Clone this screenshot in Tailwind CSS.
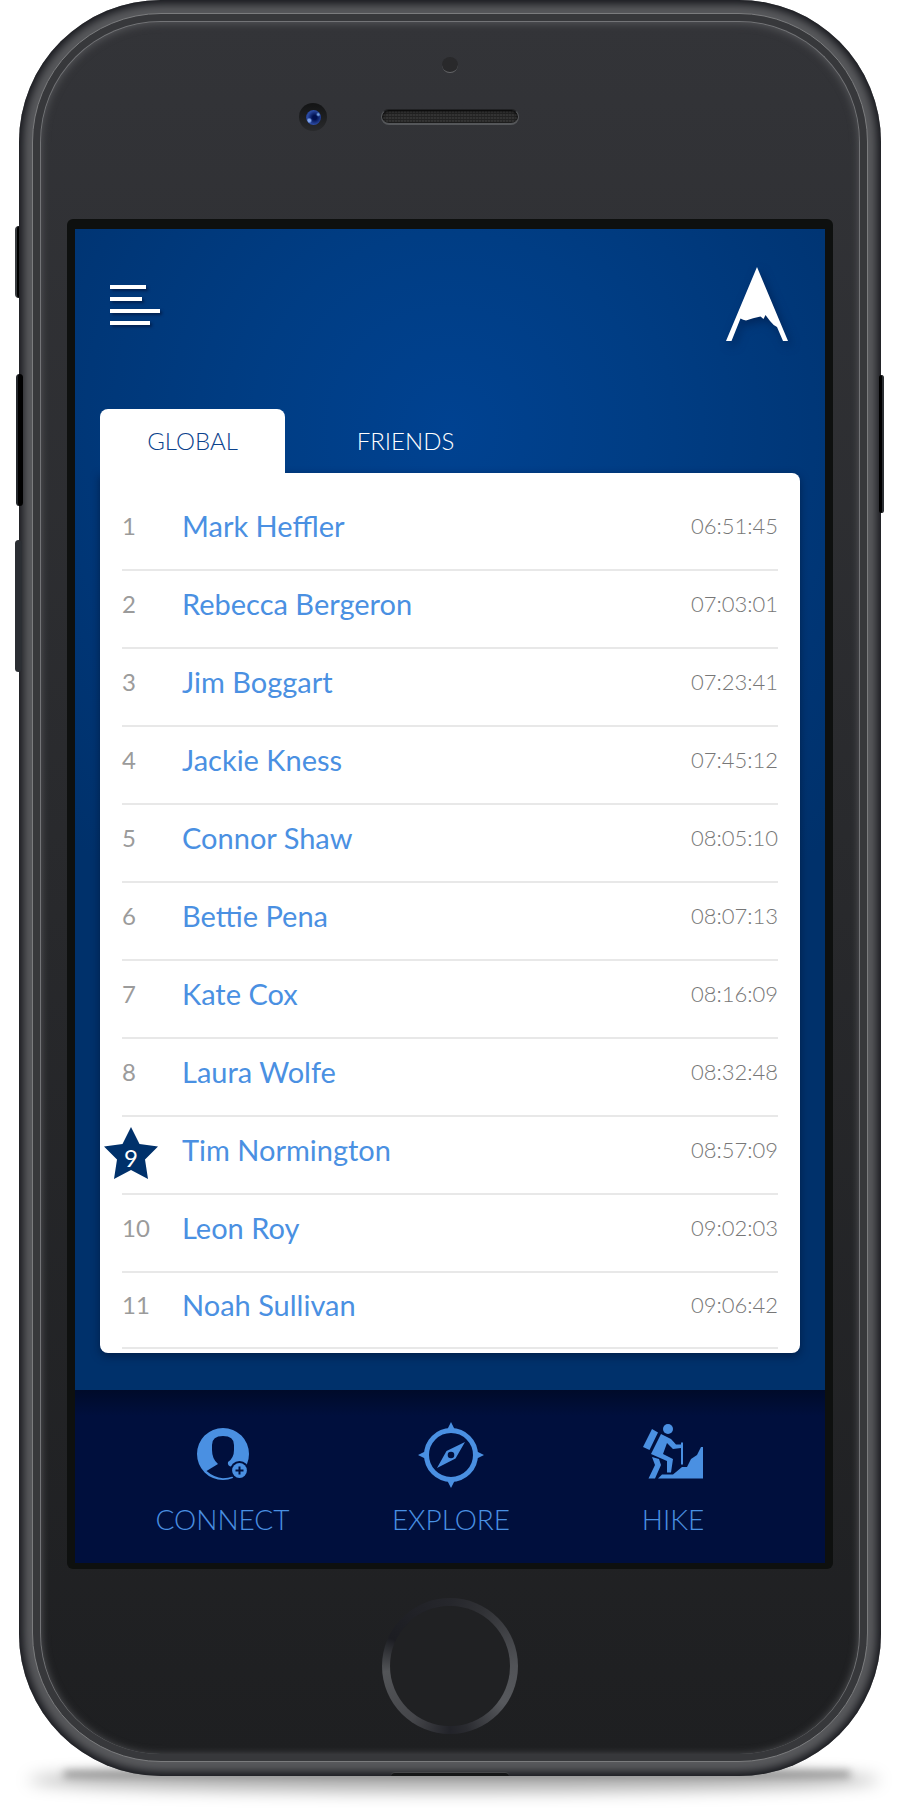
<!DOCTYPE html>
<html lang="en">
<head>
<meta charset="utf-8">
<meta name="viewport" content="width=device-width, initial-scale=1">
<title>Leaderboard</title>
<script src="https://cdn.jsdelivr.net/npm/@tailwindcss/browser@4"></script>
</head>
<body class="bg-white font-['Lato',sans-serif]">
<main class="relative pl-[19px] pr-[39px] pb-8">
  <!-- ground shadow -->
  <div class="absolute bottom-4 left-7 right-10 h-6 rounded-[50%] bg-black/30 blur-[8px]"></div>
  <div class="absolute bottom-[31px] left-16 right-[70px] h-1.5 bg-black/40 blur-[4px]"></div>

  <!-- side buttons -->
  <div class="absolute left-[15px] top-[226px] h-[72px] w-2 rounded-l-sm border-l-2 border-[#383b3f] bg-black"></div>
  <div class="absolute left-4 top-[374px] z-10 h-[132px] w-[7px] rounded-sm border-l-2 border-[#24272b] bg-black"></div>
  <div class="absolute left-[15px] top-[540px] z-10 h-[132px] w-[7px] rounded-sm bg-[#2b2e33]"></div>
  <div class="absolute right-9 top-[375px] z-10 h-[138px] w-[5px] rounded-sm border-r-2 border-[#2c2f33] bg-black"></div>

  <div class="relative rounded-[142px] bg-[#58595c] px-[13px] pt-[13px] pb-[14px] shadow-[inset_0_0_9px_4px_#15161b]">
    <div class="rounded-[129px] border border-[#7b7c7e] bg-[#37383b] p-[7px]">
      <div class="rounded-[121px] border border-b-0 border-[#737477] bg-linear-to-b from-[#333438] to-[#1e1f21] px-[26px] pb-[20px] shadow-[inset_0_1px_9px_#58595c]">

        <!-- sensor, camera and speaker -->
        <div class="flex h-[197px] flex-col items-center pt-[35px]">
          <div class="size-4 rounded-full border-b border-[#66676a] bg-[#29292b]"></div>
          <div class="mt-[30px] grid w-full grid-cols-[1fr_auto_1fr] items-center">
            <div class="mr-[54px] grid size-7 place-items-center justify-self-end rounded-full bg-linear-to-b from-[#131415] to-[#292a2c]">
              <div class="size-[15px] rounded-full bg-[radial-gradient(circle_at_22%_70%,#7fa3ea_0_8%,transparent_18%),radial-gradient(circle_at_82%_30%,#6f9de0_0_4%,transparent_14%),radial-gradient(circle_at_58%_50%,#00104f_18%,#2b4ba4_62%,#1b2f68)]"></div>
            </div>
            <div class="h-4 w-[138px] rounded-full border border-b-2 border-[#55575a] border-t-[#202123] bg-[#333] bg-[repeating-linear-gradient(0deg,#222_0_1px,transparent_1px_3px),repeating-linear-gradient(90deg,#282828_0_1px,transparent_1px_3px)] shadow-[inset_0_1px_3px_#000]"></div>
          </div>
        </div>

        <!-- display -->
        <div class="rounded-md bg-[#0e100f] px-2 pt-[10px] pb-[6px]">
          <div class="bg-[#00316b] bg-[radial-gradient(circle_560px_at_50%_200px,#004291_0%,#003d84_35%,#003574_75%,#00316b_100%)]">
            <header class="flex items-start justify-between pt-[38px] pr-[37px] pl-[35px]">
              <button aria-label="Menu" class="mt-[18px] flex flex-col gap-2 *:h-1 *:bg-white *:shadow-[2px_2px_3px_#00204f]">
                <span class="w-9"></span><span class="w-8"></span><span class="w-[50px]"></span><span class="w-10"></span>
              </button>
              <a href="#" aria-label="Home">
                <svg class="h-[75px] w-[62px] overflow-visible drop-shadow-[3px_4px_5px_rgba(0,25,70,.6)]" viewBox="0 0 62 75" fill="#fff"><path d="M31 0L62 74H57L51 60Q47 58 44 54L39.500 48L37.500 52L34.500 49.500Q27 51 20 53.500Q17 53 14.500 51.500L5.500 74H0Z"/></svg>
              </a>
            </header>

            <section class="px-[25px] pt-[67px] pb-[37px]">
              <div role="tablist" class="flex h-16 gap-7 text-2xl">
                <button role="tab" aria-selected="true" class="w-[185px] rounded-t-lg bg-white font-light text-[#0b428c]">GLOBAL</button>
                <button role="tab" aria-selected="false" class="w-[185px] font-light text-white">FRIENDS</button>
              </div>
              <div class="rounded-lg rounded-tl-none bg-white px-[22px] pt-[19px] pb-1 shadow-[0_3px_8px_rgba(0,18,50,.6)]">
                <table class="w-full table-fixed border-collapse text-left text-[29px] leading-8 text-[#4a90e2] [&_td]:pb-2.5 [&_td:first-child]:w-[60px] [&_td:first-child]:text-2xl [&_td:first-child]:text-[#9b9b9b] [&_td:last-child]:w-[120px] [&_td:last-child]:text-right [&_td:last-child]:text-[22px] [&_td:last-child]:font-light [&_td:last-child]:text-[#777] [&_tr]:h-[78px] [&_tr]:border-b-2 [&_tr]:border-[#e8e8e8] [&_tr:last-child]:h-[76px]">
                  <tbody>
                    <tr><td>1</td><td>Mark Heffler</td><td>06:51:45</td></tr>
                    <tr><td>2</td><td>Rebecca Bergeron</td><td>07:03:01</td></tr>
                    <tr><td>3</td><td>Jim Boggart</td><td>07:23:41</td></tr>
                    <tr><td>4</td><td>Jackie Kness</td><td>07:45:12</td></tr>
                    <tr><td>5</td><td>Connor Shaw</td><td>08:05:10</td></tr>
                    <tr><td>6</td><td>Bettie Pena</td><td>08:07:13</td></tr>
                    <tr><td>7</td><td>Kate Cox</td><td>08:16:09</td></tr>
                    <tr><td>8</td><td>Laura Wolfe</td><td>08:32:48</td></tr>
                    <tr>
                      <td>
                        <div class="relative -ml-[18px] grid h-8 w-[54px] place-items-center text-white">
                          <svg class="absolute -top-[7px] left-0 h-[52px] w-[54px]" viewBox="0 0 54 52" fill="#00316b"><path d="M27 0L35.500 17L54 19.500L41 32.500L44 52L27 43L10 52L13 32.500L0 19.500L18.500 17Z"/></svg>
                          <span class="relative pt-2">9</span>
                        </div>
                      </td>
                      <td>Tim Normington</td><td>08:57:09</td>
                    </tr>
                    <tr><td>10</td><td>Leon Roy</td><td>09:02:03</td></tr>
                    <tr><td>11</td><td>Noah Sullivan</td><td>09:06:42</td></tr>
                  </tbody>
                </table>
              </div>
            </section>

            <nav class="grid h-[173px] grid-cols-[229fr_228fr_216fr] bg-[#000f3d] bg-linear-to-b from-[#000b2a] to-[#000f3d] to-15% pr-11 pl-[33px] pt-[31px] text-[28px] leading-8 font-light text-[#4a90e2]">
              <a href="#" class="flex flex-col items-center gap-3.5">
                <svg class="h-[68px] w-[54px]" viewBox="0 0 54 68" fill="currentColor">
                  <path fill-rule="evenodd" d="M27 7A26 26 0 1 1 27 59A26 26 0 1 1 27 7ZM10.500 50Q18 56.500 27 57.200Q32 57.200 37 55.500L36 46Q31 45 32 41Q38 37 38 29V24Q38 15 27 15Q16 15 16 24V29Q16 38 22 43Z"/>
                  <circle cx="43.500" cy="49.500" r="9.500" fill="#000f3d"/>
                  <circle cx="43.500" cy="49.500" r="7.400"/>
                  <path d="M39.500 49.500H47.500M43.500 45.500V53.500" stroke="#000f3d" stroke-width="2"/>
                </svg>
                CONNECT
              </a>
              <a href="#" class="flex flex-col items-center gap-3.5">
                <svg class="h-[68px] w-[66px]" viewBox="0 0 66 68" fill="currentColor">
                  <circle cx="33" cy="34" r="24.500" fill="none" stroke="currentColor" stroke-width="5"/>
                  <path d="M33 1L36.500 8H29.500ZM33 67L36.500 60H29.500ZM0 34L7 30.500V37.500ZM66 34L59 30.500V37.500Z"/>
                  <path fill-rule="evenodd" d="M47 21L37.500 37.500L19 47L28.500 30ZM33 30.700A3.300 3.300 0 1 0 33 37.300A3.300 3.300 0 1 0 33 30.700Z"/>
                </svg>
                EXPLORE
              </a>
              <a href="#" class="flex flex-col items-center gap-3.5">
                <svg class="h-[68px] w-[60px]" viewBox="0 0 60 68" fill="currentColor">
                  <circle cx="25" cy="8" r="5"/>
                  <path d="M9 8L15 11.500L6.500 29L0 26ZM18 13L28 18L33 23.500H38V21.500H40V43.500H38V27L30 28L24 22L20 33L30 38L28 51.500H24V40L8 33ZM9 36L16 38L18 44L12 57.500H5.500L12 44ZM15 57.500L19 53.500H30L39 46H44L48 38L54 34L58 26H60V57.500Z"/>
                </svg>
                HIKE
              </a>
            </nav>
          </div>
        </div>

        <!-- home button -->
        <button aria-label="Home button" class="mx-auto mt-[29px] block size-[136px] rounded-full bg-[conic-gradient(#26272c,#303135_30deg,#515357_90deg,#57595d_125deg,#2a2b30_165deg,#222329_180deg,#45464a_215deg,#535558_265deg,#1c1d22_295deg,#26272c)] p-2">
          <span class="block size-full rounded-full bg-[#202123]"></span>
        </button>
      </div>
    </div>
    <div class="absolute bottom-0 left-1/2 h-1 w-[118px] -translate-x-1/2 rounded-t-sm border-t border-[#47484a] bg-[#151617]"></div>
  </div>
</main>
</body>
</html>
